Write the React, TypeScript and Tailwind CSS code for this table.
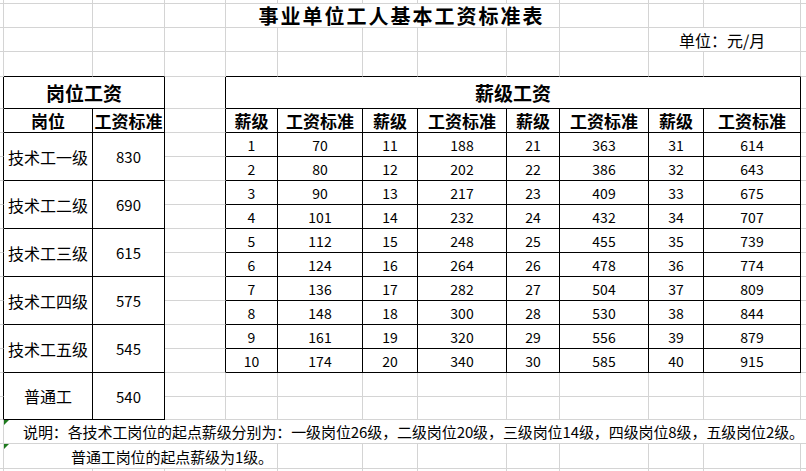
type Cell = { r: number; c: number; rs?: number; cs?: number; text?: string; kind?: string; flag?: boolean };

const grades = [
  [1, 70, 11, 188, 21, 363, 31, 614],
  [2, 80, 12, 202, 22, 386, 32, 643],
  [3, 90, 13, 217, 23, 409, 33, 675],
  [4, 101, 14, 232, 24, 432, 34, 707],
  [5, 112, 15, 248, 25, 455, 35, 739],
  [6, 124, 16, 264, 26, 478, 36, 774],
  [7, 136, 17, 282, 27, 504, 37, 809],
  [8, 148, 18, 300, 28, 530, 38, 844],
  [9, 161, 19, 320, 29, 556, 39, 879],
  [10, 174, 20, 340, 30, 585, 40, 915],
];

const posts: [string, number][] = [
  ["技术工一级", 830],
  ["技术工二级", 690],
  ["技术工三级", 615],
  ["技术工四级", 575],
  ["技术工五级", 545],
  ["普通工", 540],
];

const ROWS = 21;
const COLS = 13;

const colSpan: Record<number, string> = {
  1: "",
  2: "col-span-2",
  4: "col-span-4",
  5: "col-span-5",
  8: "col-span-8",
  12: "col-span-12",
};
const rowSpan: Record<number, string> = { 1: "", 2: "row-span-2" };

const kinds: Record<string, string> = {
  title: "justify-center pl-[18px] text-[20px] font-bold tracking-[2px]",
  unit: "justify-start pl-[30px] text-[16px]",
  head: "justify-center text-[19px] font-bold",
  sub: "justify-center text-[17px] font-bold",
  num: "justify-center text-[14px]",
  post: "justify-center text-[16px]",
  pay: "justify-center text-[15px]",
  note: "justify-start pl-[19px] text-[15px] tracking-[-0.1px]",
  note2: "justify-start pl-[67px] text-[15px] tracking-[-0.1px]",
};

// 岗位工资 / 薪级工资 两块表格的范围
const inTable = (r: number, c: number) =>
  (r >= 4 && r <= 17 && c >= 1 && c <= 2) || (r >= 4 && r <= 15 && c >= 4 && c <= 11);

function buildCells(): Cell[] {
  const cells: Cell[] = [
    { r: 1, c: 4, cs: 5, text: "事业单位工人基本工资标准表", kind: "title" },
    { r: 2, c: 10, cs: 2, text: "单位：元/月", kind: "unit" },
    { r: 4, c: 1, cs: 2, text: "岗位工资", kind: "head" },
    { r: 4, c: 4, cs: 8, text: "薪级工资", kind: "head" },
    { r: 5, c: 1, text: "岗位", kind: "sub" },
    { r: 5, c: 2, text: "工资标准", kind: "sub" },
    { r: 18, c: 1, cs: 12, flag: true, kind: "note",
      text: "说明：各技术工岗位的起点薪级分别为：一级岗位26级，二级岗位20级，三级岗位14级，四级岗位8级，五级岗位2级。" },
    { r: 19, c: 1, cs: 4, flag: true, kind: "note2", text: "普通工岗位的起点薪级为1级。" },
  ];
  for (let i = 0; i < 4; i++) {
    cells.push({ r: 5, c: 4 + i * 2, text: "薪级", kind: "sub" });
    cells.push({ r: 5, c: 5 + i * 2, text: "工资标准", kind: "sub" });
  }
  grades.forEach((row, i) => {
    row.forEach((v, j) => cells.push({ r: 6 + i, c: 4 + j, text: String(v), kind: "num" }));
  });
  posts.forEach(([name, pay], i) => {
    cells.push({ r: 6 + i * 2, c: 1, rs: 2, text: name, kind: "post" });
    cells.push({ r: 6 + i * 2, c: 2, rs: 2, text: String(pay), kind: "pay" });
  });

  const used = Array.from({ length: ROWS }, () => Array(COLS).fill(false));
  cells.forEach((cell) => {
    for (let r = cell.r; r < cell.r + (cell.rs ?? 1); r++)
      for (let c = cell.c; c < cell.c + (cell.cs ?? 1); c++) used[r][c] = true;
  });
  for (let r = 0; r < ROWS; r++)
    for (let c = 0; c < COLS; c++) if (!used[r][c]) cells.push({ r, c });

  return cells.sort((a, b) => a.r - b.r || a.c - b.c);
}

function SheetCell({ cell }: { cell: Cell }) {
  const rs = cell.rs ?? 1;
  const cs = cell.cs ?? 1;
  const lastR = cell.r + rs - 1;
  const lastC = cell.c + cs - 1;

  let rightBlack = false;
  for (let r = cell.r; r <= lastR; r++) if (inTable(r, lastC) || inTable(r, lastC + 1)) rightBlack = true;
  let bottomBlack = false;
  for (let c = cell.c; c <= lastC; c++) if (inTable(lastR, c) || inTable(lastR + 1, c)) bottomBlack = true;

  const right = lastC === COLS - 1 ? "" : rightBlack ? "border-r border-r-black" : "border-r border-r-[#d4d4d4]";
  const bottom = lastR === ROWS - 1 ? "" : bottomBlack ? "border-b border-b-black" : "border-b border-b-[#d4d4d4]";

  return (
    <div
      className={`relative flex items-center whitespace-nowrap leading-none text-black ${colSpan[cs]} ${rowSpan[rs]} ${right} ${bottom} ${
        cell.kind ? kinds[cell.kind] : ""
      }`}
    >
      {cell.flag && (
        <span className="absolute left-0 top-0 h-0 w-0 border-t-[5px] border-r-[5px] border-t-[#1f7a1f] border-r-transparent" />
      )}
      {cell.text}
    </div>
  );
}

export default function App() {
  const cells = buildCells();
  return (
    <div className="h-[471px] w-[806px] overflow-hidden bg-white font-['Noto_Sans_CJK_SC',_'Noto_Sans',_sans-serif]">
      <div className="grid grid-cols-[4px_89px_72px_61px_52px_85px_55px_89px_53px_89px_55px_97px_5px] grid-rows-[4px_24px_24px_25px_32px_24px_24px_24px_24px_24px_24px_24px_24px_24px_24px_24px_24px_23px_24px_25px_2px]">
        {cells.map((cell) => (
          <SheetCell key={`${cell.r}-${cell.c}`} cell={cell} />
        ))}
      </div>
    </div>
  );
}
